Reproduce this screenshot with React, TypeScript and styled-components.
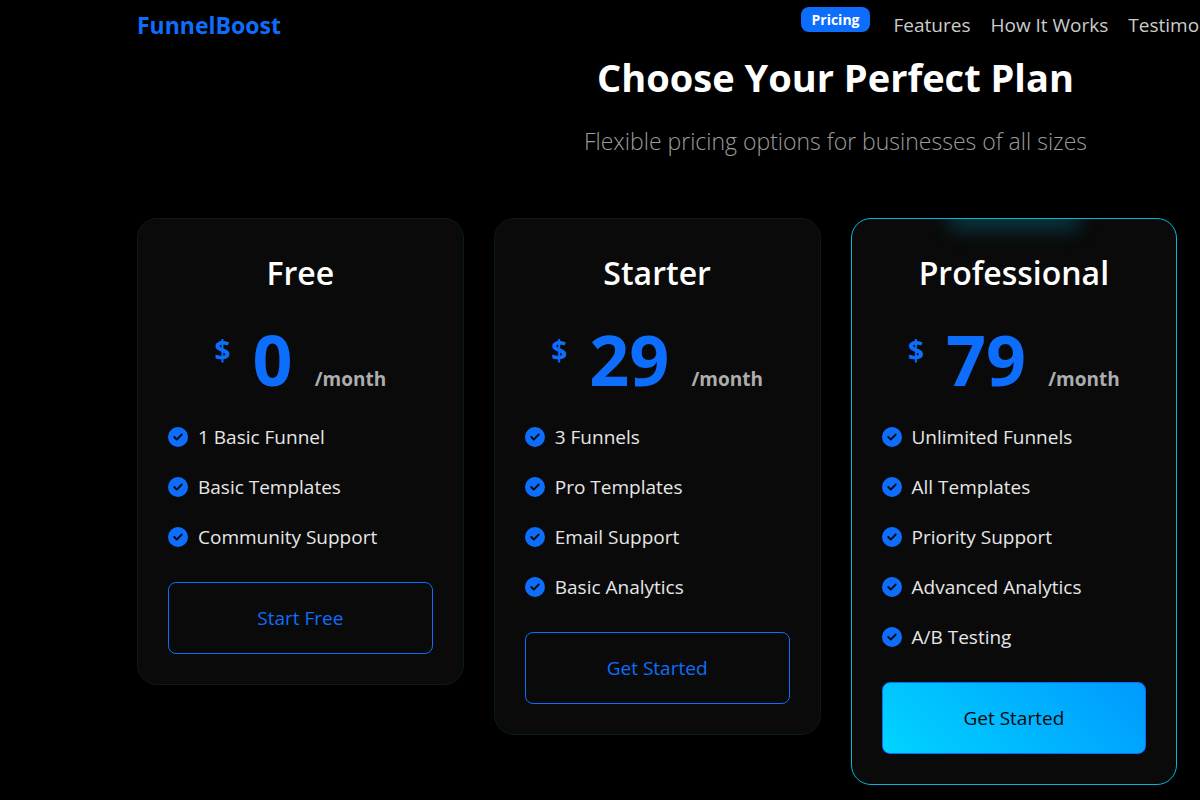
import React from "react";
import styled, { createGlobalStyle } from "styled-components";
import { FaCircleCheck } from "react-icons/fa6";

const GlobalStyle = createGlobalStyle`
  *, *::before, *::after { box-sizing: border-box; }
  body {
    margin: 0;
    background: #000;
    color: #fff;
    font-family: "Segoe UI", "Open Sans", "Noto Sans", sans-serif;
    font-size: 19px;
    line-height: 30px;
    overflow: hidden;
  }
`;

const Page = styled.div`
  min-width: 1671px;
  min-height: 100vh;
`;

const Container = styled.div`
  width: 100%;
  max-width: 1397px;
  margin: 0 auto;
`;

const Header = styled(Container).attrs({ as: "header" })`
  display: grid;
  grid-template-columns: 1fr auto 1fr;
  column-gap: 24px;
  padding-top: 7px;
  height: 50px;
`;

const Brand = styled.a`
  color: #0d6efd;
  font-size: 23px;
  font-weight: 700;
  line-height: 36px;
  text-decoration: none;
`;

const Badge = styled.span`
  height: 25px;
  padding: 0 10px;
  border-radius: 8px;
  background: #0d6efd;
  font-size: 14px;
  font-weight: 700;
  line-height: 25px;
`;

const Nav = styled.nav`
  display: flex;
  gap: 20px;
`;

const NavLink = styled.a`
  color: #ccc;
  line-height: 36px;
  text-decoration: none;
`;

const Intro = styled(Container).attrs({ as: "section" })`
  padding-bottom: 60px;
  text-align: center;
`;

const Title = styled.h1`
  margin: 0 0 20px;
  font-size: 38px;
  font-weight: 700;
  line-height: 54px;
`;

const Subtitle = styled.p`
  margin: 0;
  color: #9c9c9c;
  font-size: 23px;
  font-weight: 300;
  line-height: 34px;
`;

const Plans = styled(Container).attrs({ as: "main" })`
  display: grid;
  grid-template-columns: repeat(4, 1fr);
  gap: 30px;
  align-items: start;
`;

const Card = styled.article<{ $featured?: boolean }>`
  position: relative;
  overflow: hidden;
  padding: 30px;
  border: 1px solid ${(p) => (p.$featured ? "#00b8de" : "#081c20")};
  border-radius: 20px;
  background: #0a0a0a;
`;

const Glow = styled.span`
  position: absolute;
  top: -10px;
  left: 50%;
  width: 130px;
  height: 20px;
  transform: translateX(-50%);
  background: #00d4ff;
  filter: blur(10px);
  opacity: 0.25;
`;

const PlanName = styled.h2`
  margin: 0 0 30px;
  font-size: 32px;
  font-weight: 600;
  line-height: 47px;
  text-align: center;
`;

const Price = styled.p`
  display: flex;
  justify-content: center;
  align-items: baseline;
  gap: 22px;
  height: 72px;
  margin: 0 0 24px;
  color: #0d6efd;
  font-weight: 700;
`;

const Currency = styled.span`
  align-self: flex-start;
  font-size: 28px;
  line-height: 48px;
`;

const Amount = styled.span`
  font-size: 70px;
  line-height: 66px;
`;

const Period = styled.span`
  color: #adadad;
  font-size: 19px;
`;

const Features = styled.ul`
  display: grid;
  gap: 20px;
  margin: 0 0 30px;
  padding: 0;
  list-style: none;
`;

const Feature = styled.li`
  display: flex;
  align-items: center;
  gap: 10px;
  color: #e6e6e6;

  svg {
    width: 20px;
    height: 20px;
    color: #0d6efd;
  }
`;

const PlanButton = styled.button<{ $filled?: boolean }>`
  display: block;
  width: 100%;
  height: 72px;
  border: 1px solid #0d6efd;
  border-radius: 8px;
  background: ${(p) => (p.$filled ? "linear-gradient(45deg, #00d4ff, #0099ff)" : "transparent")};
  color: ${(p) => (p.$filled ? "#0a0a0a" : "#0d6efd")};
  font: inherit;
  cursor: pointer;
`;

const plans = [
  {
    name: "Free",
    price: 0,
    action: "Start Free",
    features: ["1 Basic Funnel", "Basic Templates", "Community Support"],
  },
  {
    name: "Starter",
    price: 29,
    action: "Get Started",
    features: ["3 Funnels", "Pro Templates", "Email Support", "Basic Analytics"],
  },
  {
    name: "Professional",
    price: 79,
    action: "Get Started",
    featured: true,
    features: ["Unlimited Funnels", "All Templates", "Priority Support", "Advanced Analytics", "A/B Testing"],
  },
];

export default function App() {
  return (
    <Page>
      <GlobalStyle />
      <Header>
        <div>
          <Brand href="#">FunnelBoost</Brand>
        </div>
        <Badge>Pricing</Badge>
        <Nav>
          <NavLink href="#features">Features</NavLink>
          <NavLink href="#how">How It Works</NavLink>
          <NavLink href="#testimonials">Testimonials</NavLink>
        </Nav>
      </Header>
      <Intro>
        <Title>Choose Your Perfect Plan</Title>
        <Subtitle>Flexible pricing options for businesses of all sizes</Subtitle>
      </Intro>
      <Plans>
        {plans.map((plan) => (
          <Card key={plan.name} $featured={plan.featured}>
            {plan.featured && <Glow />}
            <PlanName>{plan.name}</PlanName>
            <Price>
              <Currency>$</Currency>
              <Amount>{plan.price}</Amount>
              <Period>/month</Period>
            </Price>
            <Features>
              {plan.features.map((feature) => (
                <Feature key={feature}>
                  <FaCircleCheck aria-hidden />
                  {feature}
                </Feature>
              ))}
            </Features>
            <PlanButton type="button" $filled={plan.featured}>
              {plan.action}
            </PlanButton>
          </Card>
        ))}
      </Plans>
    </Page>
  );
}
